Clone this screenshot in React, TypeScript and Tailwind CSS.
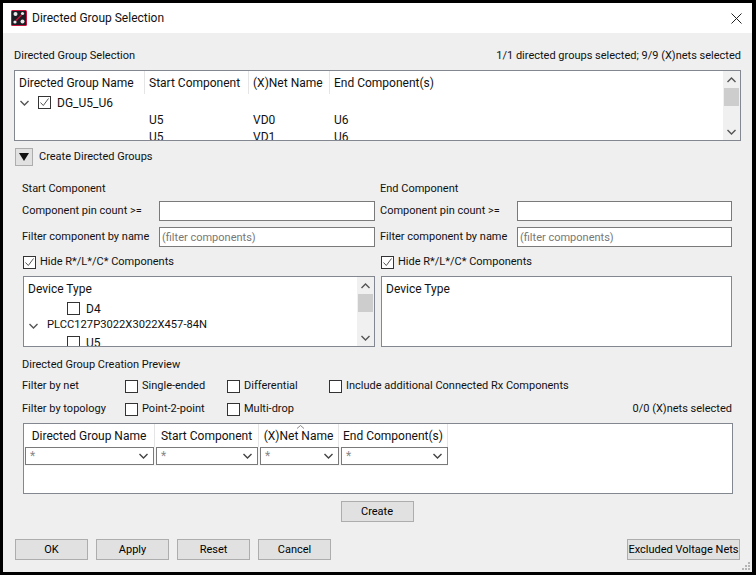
import React from "react";

const Check = ({ on = false, c = "" }: { on?: boolean; c?: string }) => (
  <span className={`w-[13px] h-[13px] border border-[#333] bg-white shrink-0 flex items-center justify-center ${c}`}>
    {on && (
      <svg width="11" height="11" viewBox="0 0 11 11" fill="none">
        <path d="M1.5 5.5 L4.3 8.5 L9.5 1.5" stroke="#555" strokeWidth="1" />
      </svg>
    )}
  </span>
);

const Chevron = ({ dir = "down", c = "#555" }: { dir?: "up" | "down"; c?: string }) => (
  <svg width="9" height="6" viewBox="0 0 9 6" fill="none" className="shrink-0">
    <path d={dir === "down" ? "M0.5 1 L4.5 5 L8.5 1" : "M0.5 5 L4.5 1 L8.5 5"} stroke={c} strokeWidth="1.4" />
  </svg>
);

const Scrollbar = () => (
  <div className="w-[17px] h-full flex flex-col items-center bg-[#f0f0f0] shrink-0">
    <div className="h-[17px] w-full flex items-center justify-center"><Chevron dir="up" /></div>
    <div className="h-[18px] w-[15px] bg-[#cdcdcd]" />
    <div className="flex-1" />
    <div className="h-[17px] w-full flex items-center justify-center"><Chevron /></div>
  </div>
);

const Btn = ({ label, w = "w-[73px]" }: { label: string; w?: string }) => (
  <button className={`${w} h-[21px] bg-[#e1e1e1] border border-[#adadad] text-[11px] leading-[20px] text-center text-black whitespace-nowrap`}>{label}</button>
);

const Field = ({ label, placeholder }: { label: string; placeholder?: string }) => (
  <div className="flex h-[20px] items-center">
    <span className="w-[137px] shrink-0 whitespace-nowrap pt-[1px]">{label}</span>
    <div className="flex-1 h-full bg-white border border-[#7a7a7a] pl-[2px] leading-[19px] text-[#777]">{placeholder}</div>
  </div>
);

const Side = ({ title, children, scroll }: { title: string; children?: React.ReactNode; scroll?: boolean }) => (
  <div className="flex flex-col">
    <div className="h-[16px] leading-[16px]">{title}</div>
    <div className="mt-[4px]"><Field label="Component pin count >=" /></div>
    <div className="mt-[6px]"><Field label="Filter component by name" placeholder="(filter components)" /></div>
    <div className="mt-[7px] h-[16px] flex items-center pl-px">
      <Check on />
      <span className="ml-[4px]">Hide R*/L*/C* Components</span>
    </div>
    <div className="mt-[6px] ml-px h-[71px] border border-[#828790] bg-white flex overflow-hidden text-[12px]">
      <div className="flex-1 min-w-0 pl-[4px]">
        <div className="h-[23px] leading-[24px]">Device Type</div>
        {children}
      </div>
      {scroll && <Scrollbar />}
    </div>
  </div>
);

const Opt = ({ label, c = "" }: { label: string; c?: string }) => (
  <div className={`flex items-center ${c}`}>
    <Check />
    <span className="ml-[4px] whitespace-nowrap">{label}</span>
  </div>
);

const Combo = ({ w }: { w: string }) => (
  <div className={`${w} h-[18px] border border-[#7a7a7a] bg-white flex items-center justify-between pl-[4px] pr-[5px] text-[#888] shrink-0`}>
    <span className="leading-[14px]">*</span>
    <Chevron c="#444" />
  </div>
);

const HeadCell = ({ label, w, c = "" }: { label: string; w: string; c?: string }) => (
  <div className={`${w} h-full border-r border-[#e5e5e5] shrink-0 whitespace-nowrap leading-[25px] ${c}`}>{label}</div>
);

export default function App() {
  return (
    <div
      className="w-[756px] h-[575px] bg-black pt-[3px] pl-[3px] pr-[4px] pb-[3px] text-[11px] text-[#111] overflow-hidden"
      style={{ fontFamily: 'Roboto, "Noto Sans", sans-serif' }}
    >
      <div className="relative h-full flex flex-col bg-[#efefef]">
        <div className="h-[30px] bg-white flex items-center pl-[8px] pr-[10px] shrink-0">
          <svg width="16" height="16" viewBox="0 0 16 16" className="shrink-0">
            <rect x="0" y="0" width="16" height="16" rx="1.5" fill="#c8143c" />
            <rect x="1" y="1" width="14" height="14" fill="#1c1c24" />
            <circle cx="4.5" cy="4" r="2" fill="#e8e8e8" />
            <circle cx="11.5" cy="3.5" r="1.6" fill="#e8e8e8" />
            <circle cx="11.5" cy="11.5" r="2" fill="#e8e8e8" />
            <circle cx="4" cy="12" r="1.6" fill="#e8e8e8" />
            <path d="M5 10.5 L10.5 5" stroke="#c8143c" strokeWidth="1.5" />
          </svg>
          <span className="ml-[5px] text-[12px] leading-[16px]">Directed Group Selection</span>
          <svg width="11" height="11" viewBox="0 0 11 11" fill="none" className="ml-auto">
            <path d="M0.5 0.5 L10.5 10.5 M10.5 0.5 L0.5 10.5" stroke="#222" strokeWidth="1" />
          </svg>
        </div>

        <div className="flex-1 flex flex-col px-[11px] pt-[14px]">
          <div className="h-[16px] leading-[17px] flex justify-between whitespace-nowrap">
            <span>Directed Group Selection</span>
            <span>1/1 directed groups selected; 9/9 (X)nets selected</span>
          </div>

          <div className="mt-[7px] h-[71px] border border-[#828790] bg-white flex overflow-hidden text-[12px]">
            <div className="flex-1 min-w-0">
              <div className="h-[23px] flex">
                <HeadCell label="Directed Group Name" w="w-[130px]" c="pl-[4px]" />
                <HeadCell label="Start Component" w="w-[104px]" c="pl-[4px]" />
                <HeadCell label="(X)Net Name" w="w-[81px]" c="pl-[4px]" />
                <div className="pl-[4px] leading-[25px] whitespace-nowrap">End Component(s)</div>
              </div>
              <div className="h-[17px] flex items-center pl-[5px]">
                <Chevron />
                <Check on c="ml-[9px]" />
                <span className="ml-[6px]">DG_U5_U6</span>
              </div>
              {["VD0", "VD1"].map((n) => (
                <div key={n} className="h-[17px] flex items-center">
                  <span className="w-[134px] shrink-0" />
                  <span className="w-[104px] shrink-0">U5</span>
                  <span className="w-[81px] shrink-0">{n}</span>
                  <span>U6</span>
                </div>
              ))}
            </div>
            <Scrollbar />
          </div>

          <div className="mt-[7px] h-[18px] flex items-center pl-px">
            <span className="w-[18px] h-[18px] bg-[#e1e1e1] border border-[#adadad] flex items-center justify-center">
              <svg width="10" height="8" viewBox="0 0 10 8"><path d="M0 0 H10 L5 8 Z" fill="#111" /></svg>
            </span>
            <span className="ml-[6px] pt-[1px]">Create Directed Groups</span>
          </div>

          <div className="mt-[15px] pl-[8px] pr-[9px] grid grid-cols-[353px_352px] gap-x-[5px]">
            <Side title="Start Component" scroll>
              <div className="h-[17px] flex items-center pl-[39px]">
                <Check />
                <span className="ml-[6px]">D4</span>
              </div>
              <div className="h-[17px] flex items-center pl-[1px]">
                <Chevron />
                <span className="ml-[9px] whitespace-nowrap text-[11.2px]">PLCC127P3022X3022X457-84N</span>
              </div>
              <div className="h-[17px] flex items-center pl-[39px]">
                <Check />
                <span className="ml-[6px]">U5</span>
              </div>
            </Side>
            <Side title="End Component" />
          </div>

          <div className="mt-[10px] pl-[8px] h-[16px] leading-[16px]">Directed Group Creation Preview</div>

          <div className="mt-[5px] pl-[8px] h-[16px] flex items-center">
            <span className="w-[103px] shrink-0">Filter by net</span>
            <Opt label="Single-ended" c="w-[102px]" />
            <Opt label="Differential" c="w-[102px]" />
            <Opt label="Include additional Connected Rx Components" />
          </div>
          <div className="mt-[7px] pl-[8px] pr-[9px] h-[16px] flex items-center">
            <span className="w-[103px] shrink-0">Filter by topology</span>
            <Opt label="Point-2-point" c="w-[102px]" />
            <Opt label="Multi-drop" />
            <span className="ml-auto">0/0 (X)nets selected</span>
          </div>

          <div className="mt-[6px] ml-[9px] mr-[8px] h-[71px] border border-[#828790] bg-white relative">
            <div className="h-[23px] flex w-[425px] text-[12px]">
              <HeadCell label="Directed Group Name" w="w-[131px]" c="text-center" />
              <HeadCell label="Start Component" w="w-[104px]" c="text-center" />
              <HeadCell label="(X)Net Name" w="w-[80px]" c="text-center" />
              <HeadCell label="End Component(s)" w="w-[109px]" c="text-center" />
            </div>
            <div className="h-[19px] w-[424px] flex gap-[2px] pl-px bg-[#f7f7f7] text-[12px]">
              <Combo w="w-[129px]" />
              <Combo w="w-[102px]" />
              <Combo w="w-[79px]" />
              <Combo w="w-[107px]" />
            </div>
            <svg width="7" height="4" viewBox="0 0 7 4" fill="none" className="absolute left-[273px] top-[1px]">
              <path d="M0 3.5 L3.5 0.5 L7 3.5" stroke="#888" strokeWidth="1" />
            </svg>
          </div>

          <div className="mt-[7px] flex justify-center pr-[1px]">
            <Btn label="Create" />
          </div>

          <div className="mt-[17px] flex gap-[8px] pl-px pr-px">
            <Btn label="OK" />
            <Btn label="Apply" />
            <Btn label="Reset" />
            <Btn label="Cancel" />
            <div className="ml-auto"><Btn label="Excluded Voltage Nets" w="w-[113px]" /></div>
          </div>
        </div>

        <svg width="9" height="9" viewBox="0 0 9 9" className="absolute right-[2px] bottom-[2px]">
          <g fill="#b5b5b5">
            <rect x="7" y="1" width="2" height="2" />
            <rect x="4" y="4" width="2" height="2" /><rect x="7" y="4" width="2" height="2" />
            <rect x="1" y="7" width="2" height="2" /><rect x="4" y="7" width="2" height="2" /><rect x="7" y="7" width="2" height="2" />
          </g>
        </svg>
      </div>
    </div>
  );
}
